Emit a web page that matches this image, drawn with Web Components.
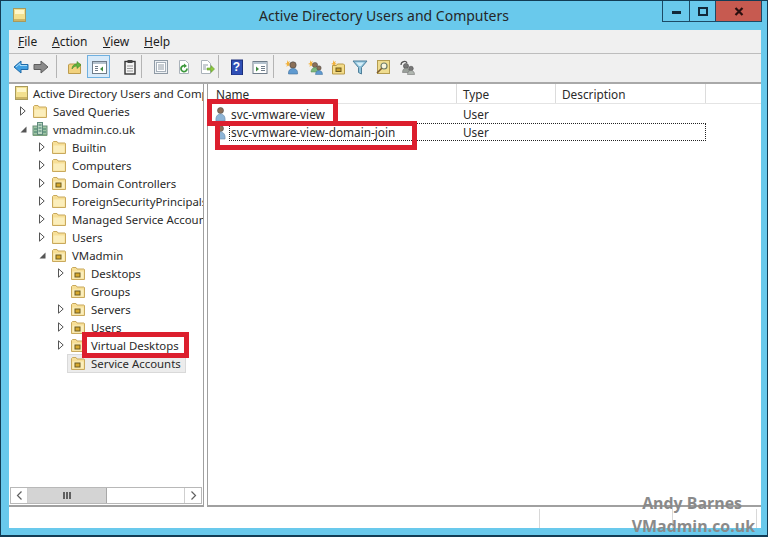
<!DOCTYPE html>
<html>
<head>
<meta charset="utf-8">
<title>Active Directory Users and Computers</title>
<style>
  html, body { margin: 0; padding: 0; overflow: hidden; }
  body { font-family: "Noto Sans", "Open Sans", sans-serif; font-size: 12px; color: #1e1e1e; }
</style>
</head>
<body>

<ad-window>
  <ad-titlebar slot="title">Active Directory Users and Computers</ad-titlebar>
  <ad-menubar slot="menu"></ad-menubar>
  <ad-toolbar slot="toolbar"></ad-toolbar>

  <ad-tree slot="tree">
    <ad-tree-item level="0" icon="root" expander="none">Active Directory Users and Computers</ad-tree-item>
    <ad-tree-item level="1" icon="folder" expander="closed">Saved Queries</ad-tree-item>
    <ad-tree-item level="1" icon="domain" expander="open">vmadmin.co.uk</ad-tree-item>
    <ad-tree-item level="2" icon="folder" expander="closed">Builtin</ad-tree-item>
    <ad-tree-item level="2" icon="folder" expander="closed">Computers</ad-tree-item>
    <ad-tree-item level="2" icon="ou" expander="closed">Domain Controllers</ad-tree-item>
    <ad-tree-item level="2" icon="folder" expander="closed">ForeignSecurityPrincipals</ad-tree-item>
    <ad-tree-item level="2" icon="folder" expander="closed">Managed Service Accounts</ad-tree-item>
    <ad-tree-item level="2" icon="folder" expander="closed">Users</ad-tree-item>
    <ad-tree-item level="2" icon="ou" expander="open">VMadmin</ad-tree-item>
    <ad-tree-item level="3" icon="ou" expander="closed">Desktops</ad-tree-item>
    <ad-tree-item level="3" icon="ou" expander="none">Groups</ad-tree-item>
    <ad-tree-item level="3" icon="ou" expander="closed">Servers</ad-tree-item>
    <ad-tree-item level="3" icon="ou" expander="closed">Users</ad-tree-item>
    <ad-tree-item level="3" icon="ou" expander="closed">Virtual Desktops</ad-tree-item>
    <ad-tree-item level="3" icon="ou" expander="none" selected>Service Accounts</ad-tree-item>
  </ad-tree>

  <ad-list slot="list">
    <ad-list-row type="User">svc-vmware-view</ad-list-row>
    <ad-list-row type="User" focused>svc-vmware-view-domain-join</ad-list-row>
  </ad-list>

  <ad-statusbar slot="status"></ad-statusbar>
</ad-window>

<!-- red annotations and the watermark lie over the window -->
<ad-callout style="left:207px;top:99px;width:131px;height:27px"></ad-callout>
<ad-callout style="left:215px;top:121px;width:202px;height:29px"></ad-callout>
<ad-callout style="left:82px;top:332px;width:107px;height:26px"></ad-callout>
<ad-watermark></ad-watermark>

<script>
// all the small pictures, 16x16 unless the caller says otherwise
const folderBody = `
  <path d="M1.500 14.500V3.500l1-1h3.500l1 1.500h7l.5.5v10z" fill="#f7df97" stroke="#c9a95c"/>
  <path d="M2.500 6.500h11v7h-11z" fill="#fbeebc"/>`;

const ICONS = {
  root: `<rect x="1.500" y="1.500" width="12" height="13" fill="#f3e08f" stroke="#a89a5c"/>
    <rect x="3" y="3" width="9" height="4" fill="#fff7c9"/><rect x="2" y="12" width="11" height="2" fill="#cdb565"/>`,
  folder: folderBody,
  ou: folderBody + `<rect x="5" y="8" width="5" height="4" fill="#d7a92f" stroke="#6d5a1e"/>`,
  domain: `<rect x="1" y="5" width="5" height="9" fill="#9fc7a4" stroke="#6a8f7a"/>
    <rect x="10" y="5" width="5" height="9" fill="#9fc7a4" stroke="#6a8f7a"/>
    <rect x="5.500" y="1.500" width="5" height="12" fill="#bcd7c4" stroke="#5f8a7c"/>
    <path d="M6.500 4h3M6.500 7h3M6.500 10h3M2 8h3M11 8h3M2 11h3M11 11h3" stroke="#3f7a6a"/>
    <path d="M1 14.500h14" stroke="#7aa07a"/>`,
  user: `<circle cx="7.500" cy="4.500" r="3" fill="#8a6f58" stroke="#4b4b4b" stroke-width=".6"/>
    <path d="M3 15c-.6-4 1.200-7 4.500-7s5.100 3 4.500 7z" fill="#8db4d6" stroke="#6488a8" stroke-width=".6"/>`,
  back: `<path d="M1 8l7-6v3.500h7v5H8V14z" fill="#3f9ee0" stroke="#1f6aa8"/><path d="M3 8l4-3.500v2h7" fill="none" stroke="#a8dcf8"/>`,
  forward: `<path d="M15 8L8 2v3.500H1v5h7V14z" fill="#8a8a8a" stroke="#5e5e5e"/>`,
  up: `<path d="M1.500 14.500V6l1-1h11v9.500z" fill="#f2d27e" stroke="#bd9c4e"/><path d="M5 10c0-3 2-5 5-5V2.500L14 6l-4 3.500V7c-2 0-4 1-5 3z" fill="#63b53f" stroke="#3f8a2a" stroke-width=".6"/>`,
  panel: `<rect x="1.500" y="2.500" width="14" height="12" fill="#fff" stroke="#6f7d8a"/>
    <rect x="2" y="3" width="13" height="2" fill="#b5c3cf"/>
    <path d="M4 7.500h3M4 9.500h3M4 11.500h3" stroke="#6f7d8a"/>
    <path d="M12 7.500v5l-3-2.500z" fill="#3f8a3f"/>`,
  clipboard: `<rect x="3" y="2.500" width="10" height="12.500" fill="#f4f4f4" stroke="#333" stroke-width="1.400"/>
    <rect x="5.500" y="1" width="5" height="3" fill="#444"/><path d="M5 7h6M5 9.500h6M5 12h6" stroke="#999"/>`,
  props: `<rect x="1.500" y="1.500" width="13" height="13" fill="#eef1f4" stroke="#8f9aa5"/>
    <rect x="3.500" y="3.500" width="9" height="9" fill="#fff" stroke="#a6b0ba"/><path d="M5 6h6M5 8h6M5 10h6" stroke="#8f9aa5"/>`,
  refresh: `<path d="M3.500 1.500h6l3 3v10h-9z" fill="#fff" stroke="#aab2ba"/>
    <path d="M11 9.500A3 3 0 1 1 9.500 7" fill="none" stroke="#3f9a3f" stroke-width="1.800"/><path d="M8 4.500l3 2.500-3 2z" fill="#3f9a3f"/>`,
  exportlist: `<path d="M2.500 1.500h6l3 3v10h-9z" fill="#fff" stroke="#aab2ba"/>
    <path d="M4 6h5M4 8h3M4 10h3" stroke="#8f9aa5"/><path d="M8 9h4V6.500l3.500 3.500-3.500 3.500V11H8z" fill="#8cc63f" stroke="#5f9a2a" stroke-width=".6"/>`,
  help: `<rect x="2.500" y="1" width="11" height="15" fill="#2f4fb5" stroke="#1c2f7a"/>`,
  viewpanel: `<rect x="1" y="2.500" width="14" height="12" fill="#fff" stroke="#6f7d8a"/>
    <rect x="1.500" y="3" width="13" height="2" fill="#b5c3cf"/>
    <path d="M9 7.500h4M9 9.500h4M9 11.500h4" stroke="#6f7d8a"/><path d="M4 7.500v5l3-2.500z" fill="#3f8a3f"/>`,
  newuser: `<path d="M3 1l1 2 2-1-1 2 2 1-2 .6.500 2L4 6.500 2.500 8 3 5.500 1 5l2-1z" fill="#f2b23c"/>
    <circle cx="9" cy="6" r="3.200" fill="#8a6f58" stroke="#444" stroke-width=".6"/>
    <path d="M4.500 15c-.4-3.500 1.500-5.500 4.500-5.500s5 2 4.500 5.500z" fill="#5f9ad0" stroke="#3f6f9a" stroke-width=".6"/>`,
  newgroup: `<path d="M3 1l1 2 2-1-1 2 2 1-2 .6.500 2L4 6.500 2.500 8 3 5.500 1 5l2-1z" fill="#f2b23c"/>
    <circle cx="8" cy="6" r="2.600" fill="#8a6f58" stroke="#444" stroke-width=".5"/><path d="M4 13c0-3 2-4.500 4-4.500s4 1.500 4 4.500z" fill="#7fb87f" stroke="#4f8a4f" stroke-width=".5"/>
    <circle cx="12" cy="9" r="2.200" fill="#8a6f58" stroke="#444" stroke-width=".5"/><path d="M8.500 15.500c0-2.500 1.500-4 3.500-4s3.500 1.500 3.500 4z" fill="#5f9ad0" stroke="#3f6f9a" stroke-width=".5"/>`,
  newou: `<path d="M3 1l1 2 2-1-1 2 2 1-2 .6.500 2L4 6.500 2.500 8 3 5.500 1 5l2-1z" fill="#f2b23c"/>
    <path d="M2.500 15V6.500h4l1-1.500h6l1 1v9z" fill="#f4dc88" stroke="#b89a4a"/><rect x="6" y="9" width="5" height="3.500" fill="#caa02c" stroke="#6d5a1e"/>`,
  filter: `<path d="M1 2h14L9.500 8.500V15l-3-1.500v-5z" fill="#8fc4dc" stroke="#4f7f9a"/><path d="M4 3.500h8L9 7H7z" fill="#d6eef8"/>`,
  find: `<rect x="2.500" y="1.500" width="12" height="13" fill="#efdc8f" stroke="#b49c50"/>
    <circle cx="9" cy="7" r="3" fill="#f8f4dc" stroke="#6f7d6a" stroke-width="1.200"/><path d="M6.800 9.300L2 14" stroke="#7a5a30" stroke-width="1.600"/>`,
  addgroup: `<path d="M2 6c0-4 5-4.500 6-2" fill="none" stroke="#555" stroke-width="1.200"/>
    <circle cx="7" cy="7" r="2.600" fill="#777" stroke="#444" stroke-width=".5"/><path d="M3.500 13.500c0-3 1.500-4.500 3.500-4.500s3.500 1.500 3.500 4.500z" fill="#9aa09a" stroke="#666" stroke-width=".5"/>
    <circle cx="12" cy="9.500" r="2.300" fill="#777" stroke="#444" stroke-width=".5"/><path d="M8.500 15.500c0-2.500 1.500-4 3.500-4s3.500 1.500 3.500 4z" fill="#b0b6b0" stroke="#666" stroke-width=".5"/>`
};

function svgIcon(name, size) {
  size = size || 16;
  return `<svg width="${size}" height="${size}" viewBox="0 0 16 16" aria-hidden="true">${ICONS[name]}</svg>`;
}

class AdWindow extends HTMLElement {
  constructor() {
    super();
    this.attachShadow({ mode: "open" }).innerHTML = `
      <style>
        :host {
          display: flex; flex-direction: column; box-sizing: border-box;
          width: 768px; height: 537px;
          background: #69c9ec;
          border: 1px solid #123c55; border-bottom-width: 2px;
          padding: 0 6px 7px 8px;
        }
        .body { flex: 1; min-height: 0; display: flex; flex-direction: column; background: #fff; }
        .panes { flex: 1; min-height: 0; display: flex; gap: 3px; }
      </style>
      <slot name="title"></slot>
      <div class="body">
        <slot name="menu"></slot>
        <slot name="toolbar"></slot>
        <div class="panes">
          <slot name="tree"></slot>
          <slot name="list"></slot>
        </div>
        <slot name="status"></slot>
      </div>`;
  }
}

class AdTitlebar extends HTMLElement {
  constructor() {
    super();
    this.attachShadow({ mode: "open" }).innerHTML = `
      <style>
        :host {
          display: grid; grid-template-columns: 1fr auto 1fr; align-items: start;
          height: 29px; margin: 0 -6px 0 -8px; padding: 0 5px 0 11px;
          font-size: 14px; color: #262626;
        }
        .app { margin-top: 6px; display: block; }
        .text { margin: 5px 0 0 -6px; line-height: 20px; white-space: nowrap; }
        .btns { justify-self: end; display: flex; height: 20px; border: 1px solid #1c4a66; border-top: 0; }
        .btn { display: flex; align-items: center; justify-content: center; border-left: 1px solid #1c4a66; }
        .btn:first-child { border-left: 0; }
        .w1 { width: 26px; } .w2 { width: 25px; }
        .close { width: 45px; background: #c75a50; }
        .min { width: 9px; height: 3px; background: #12293a; margin-top: 3px; }
        .max { width: 6px; height: 5px; border: 2px solid #12293a; }
      </style>
      <span class="app">${svgIcon("root")}</span>
      <span class="text"><slot></slot></span>
      <div class="btns">
        <div class="btn w1"><div class="min"></div></div>
        <div class="btn w2"><div class="max"></div></div>
        <div class="btn close">
          <svg width="10" height="9" viewBox="0 0 10 9"><path d="M1.500 1l7 7M8.500 1l-7 7" stroke="#2a0f0f" stroke-width="2.200"/></svg>
        </div>
      </div>`;
  }
}

class AdMenubar extends HTMLElement {
  constructor() {
    super();
    this.attachShadow({ mode: "open" }).innerHTML = `
      <style>
        :host {
          display: flex; height: 24px; align-items: center; box-sizing: border-box;
          background: #f0f0f0; padding: 0 0 0 9px;
          font-size: 12px; color: #1e1e1e;
          border-bottom: 1px solid #bdbdbd;
        }
        span { display: block; }
        u { text-underline-offset: 1px; }
        .file { width: 34px; } .action { width: 51px; } .view { width: 41px; }
      </style>
      <span class="file"><u>F</u>ile</span>
      <span class="action"><u>A</u>ction</span>
      <span class="view"><u>V</u>iew</span>
      <span><u>H</u>elp</span>`;
  }
}

class AdToolbar extends HTMLElement {
  constructor() {
    super();
    // {icon, w} is a button, {sep, ml, mr} a separator with its margins
    const items = [
      { icon: "back", w: 20 }, { icon: "forward", w: 20 },
      { sep: 1, ml: 5, mr: 5 },
      { icon: "up", w: 25 }, { icon: "panel", w: 23, cls: "on" }, { icon: "clipboard", w: 23, ml: 8 },
      { sep: 1, ml: 0, mr: 7 },
      { icon: "props", w: 23 }, { icon: "refresh", w: 23 }, { icon: "exportlist", w: 23 },
      { sep: 1, ml: 0, mr: 6 },
      { icon: "help", w: 23 }, { icon: "viewpanel", w: 24 },
      { sep: 1, ml: 1, mr: 6 },
      { icon: "newuser", w: 23 }, { icon: "newgroup", w: 23 }, { icon: "newou", w: 23 },
      { icon: "filter", w: 22 }, { icon: "find", w: 24 }, { icon: "addgroup", w: 23 }
    ];
    const cells = items.map(item => {
      if (item.sep) return `<i class="sep" style="margin:0 ${item.mr}px 0 ${item.ml}px"></i>`;
      let inner = svgIcon(item.icon);
      if (item.icon === "help") inner = `<b class="q">?</b>` + inner;
      return `<span class="cell ${item.cls || ""}" style="width:${item.w}px;margin-left:${item.ml || 0}px">${inner}</span>`;
    }).join("");
    this.attachShadow({ mode: "open" }).innerHTML = `
      <style>
        :host {
          display: flex; align-items: center; box-sizing: border-box;
          height: 30px; padding: 0 0 3px 2px;
          background: #f0f0f0; border-bottom: 2px solid #a9a9a9;
        }
        .cell { position: relative; display: flex; height: 23px; align-items: center; justify-content: center; box-sizing: border-box; }
        .on { background: #d8eaf9; border: 1px solid #6fb0e0; }
        .sep { display: block; width: 1px; height: 23px; background: #b4b4b4; }
        .q { position: absolute; left: 0; right: 0; text-align: center; color: #fff; font: bold 12px "Liberation Sans", sans-serif; z-index: 1; }
      </style>
      ${cells}`;
  }
}

class AdTree extends HTMLElement {
  constructor() {
    super();
    this.attachShadow({ mode: "open" }).innerHTML = `
      <style>
        :host {
          display: flex; flex-direction: column; box-sizing: border-box;
          width: 195px; height: 100%; overflow: hidden;
          border-right: 1px solid #a0a0a0; border-bottom: 2px solid #a0a0a0;
        }
        .items { flex: 1; min-height: 0; overflow: hidden; }
        .bar { display: flex; height: 17px; margin: 0 1px 1px 1px; background: #fff; border: 1px solid #b8b8b8; box-sizing: border-box; }
        .end { width: 16px; display: flex; align-items: center; justify-content: center; border-right: 1px solid #cfcfcf; }
        .end.r { border-right: 0; border-left: 1px solid #cfcfcf; margin-left: auto; }
        .thumb { width: 78px; background: #d4d4d4; border-right: 1px solid #a8a8a8; display: flex; align-items: center; justify-content: center; gap: 1px; }
        .thumb i { width: 2px; height: 7px; background: #606060; }
      </style>
      <div class="items"><slot></slot></div>
      <div class="bar">
        <div class="end"><svg width="7" height="9" viewBox="0 0 7 9"><path d="M5.500 .5l-4 4 4 4" fill="none" stroke="#606060" stroke-width="1.200"/></svg></div>
        <div class="thumb"><i></i><i></i><i></i></div>
        <div class="end r"><svg width="7" height="9" viewBox="0 0 7 9"><path d="M1.500 .5l4 4-4 4" fill="none" stroke="#606060" stroke-width="1.200"/></svg></div>
      </div>`;
  }
}

class AdTreeItem extends HTMLElement {
  constructor() {
    super();
    const level = parseInt(this.getAttribute("level"));
    const expander = this.getAttribute("expander");
    let arrow = "";
    if (expander == "closed") {
      arrow = `<svg width="6" height="10" viewBox="0 0 6 10"><path d="M.5.8v8.400L5.200 5z" fill="#fff" stroke="#555"/></svg>`;
    } else if (expander == "open") {
      arrow = `<svg width="7" height="7" viewBox="0 0 7 7"><path d="M6.500.5v6h-6z" fill="#555"/></svg>`;
    }
    // the root row has no expander column, so it starts further left
    const indent = level == 0 ? 5 : 19 * level - 9;
    this.attachShadow({ mode: "open" }).innerHTML = `
      <style>
        :host {
          display: flex; align-items: center; box-sizing: border-box;
          height: 18px; padding-left: ${indent}px; white-space: nowrap;
          font-size: 11.400px; color: #2a2a2a;
        }
        .arrow { width: ${level == 0 ? 0 : 13}px; flex: none; display: flex; align-items: center; justify-content: center; padding-right: ${level == 0 ? 0 : 5}px; box-sizing: border-box; }
        .icon { display: flex; flex: none; margin-right: ${level == 0 ? 1 : 3}px; }
        .label { padding: 0 3px 0 2px; line-height: 17px; border: 1px solid transparent; margin-left: -1px; }
        :host([selected]) .sel { background: #ececec; border: 1px solid #d9d9d9; height: 17px; margin-left: -3px; padding-left: 2px; }
        .sel { display: flex; align-items: center; }
      </style>
      <span class="arrow">${arrow}</span>
      <span class="sel">
        <span class="icon">${svgIcon(this.getAttribute("icon"))}</span>
        <span class="label"><slot></slot></span>
      </span>`;
  }
}

class AdList extends HTMLElement {
  constructor() {
    super();
    this.attachShadow({ mode: "open" }).innerHTML = `
      <style>
        :host {
          display: flex; flex-direction: column; flex: 1; min-width: 0; box-sizing: border-box;
          height: 100%; background: #fff;
          border-left: 1px solid #a0a0a0; border-bottom: 2px solid #a0a0a0;
          font-size: 11.800px; color: #2a2a2a;
        }
        .head { display: flex; height: 20px; flex: none; align-items: center; border-bottom: 1px solid #e4e4e4; box-sizing: border-box; }
        .col { box-sizing: border-box; padding: 1px 0 0 6px; height: 100%; display: flex; align-items: center; border-right: 1px solid #dcdcdc; }
        .name { width: 249px; padding-left: 8px; } .type { width: 99px; } .desc { width: 150px; }
        .rows { padding-top: 1px; }
      </style>
      <div class="head">
        <div class="col name">Name</div>
        <div class="col type">Type</div>
        <div class="col desc">Description</div>
      </div>
      <div class="rows"><slot></slot></div>`;
  }
}

class AdListRow extends HTMLElement {
  constructor() {
    super();
    this.attachShadow({ mode: "open" }).innerHTML = `
      <style>
        :host { display: flex; align-items: center; height: 18px; box-sizing: border-box; width: 498px; position: relative; white-space: nowrap; }
        .icon { display: flex; margin-left: 5px; width: 18px; flex: none; }
        .name { width: 226px; flex: none; }
        .type { padding-left: 6px; }
        .focus { display: none; position: absolute; left: 21px; right: 0; top: 0; bottom: 0; border: 1px dotted #222; }
        :host([focused]) .focus { display: block; }
      </style>
      <span class="icon">${svgIcon("user")}</span>
      <span class="name"><slot></slot></span>
      <span class="type">${this.getAttribute("type")}</span>
      <span class="focus"></span>`;
  }
}

class AdStatusbar extends HTMLElement {
  constructor() {
    super();
    this.attachShadow({ mode: "open" }).innerHTML = `
      <style>
        :host { display: flex; height: 21px; box-sizing: border-box; background: #fff; padding-top: 2px; }
        div { border-right: 1px solid #d8d8d8; box-sizing: border-box; }
        .a { width: 531px; } .b { width: 133px; } .c { width: 84px; }
      </style>
      <div class="a"></div><div class="b"></div><div class="c"></div>`;
  }
}

class AdCallout extends HTMLElement {
  constructor() {
    super();
    this.attachShadow({ mode: "open" }).innerHTML = `
      <style>
        :host { display: block; position: absolute; box-sizing: border-box; border: 5px solid #dc1f2e; pointer-events: none; }
      </style>`;
  }
}

class AdWatermark extends HTMLElement {
  constructor() {
    super();
    this.attachShadow({ mode: "open" }).innerHTML = `
      <style>
        :host {
          display: flex; flex-direction: column; align-items: flex-end; position: absolute;
          right: 13px; top: 492px; font: bold 15.900px/23px "Open Sans", sans-serif; color: #8a8a8a;
        }
        .a { margin-right: 13px; }
      </style>
      <span class="a">Andy Barnes</span>
      <span>VMadmin.co.uk</span>`;
  }
}

customElements.define("ad-window", AdWindow);
customElements.define("ad-titlebar", AdTitlebar);
customElements.define("ad-menubar", AdMenubar);
customElements.define("ad-toolbar", AdToolbar);
customElements.define("ad-tree", AdTree);
customElements.define("ad-tree-item", AdTreeItem);
customElements.define("ad-list", AdList);
customElements.define("ad-list-row", AdListRow);
customElements.define("ad-statusbar", AdStatusbar);
customElements.define("ad-callout", AdCallout);
customElements.define("ad-watermark", AdWatermark);
</script>
</body>
</html>
